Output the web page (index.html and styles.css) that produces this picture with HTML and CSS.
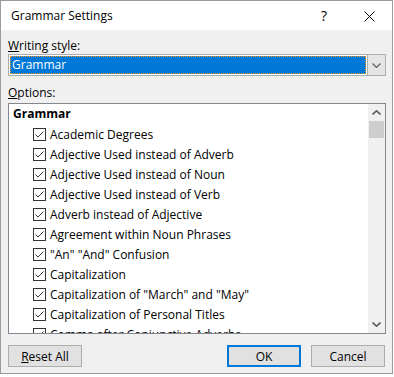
FILE: index.html
```html
<!DOCTYPE html>
<html lang="en">
<head>
    <meta charset="UTF-8">
    <meta name="viewport" content="width=device-width, initial-scale=1.0">
    <title>Grammar Settings</title>
    <link rel="stylesheet" href="styles.css">
</head>
<body>
    <div class="dialog">
        <div class="titlebar">
            <span class="title">Grammar Settings</span>
            <span class="help-btn">?</span>
            <span class="close-btn">
                <svg width="11" height="11" viewBox="0 0 11 11"><path d="M0.5 0.5 L10.5 10.5 M10.5 0.5 L0.5 10.5" stroke="#000" stroke-width="1" fill="none"/></svg>
            </span>
        </div>
        <div class="content">
            <div class="field-label"><u>W</u>riting style:</div>
            <div class="combo">
                <div class="combo-value"><span class="combo-focus">Grammar</span></div>
                <div class="combo-btn">
                    <svg width="9" height="5" viewBox="0 0 9 5"><path d="M0.5 0.5 L4.5 4.5 L8.5 0.5" stroke="#606060" stroke-width="1.2" fill="none"/></svg>
                </div>
            </div>
            <div class="field-label options-label"><u>O</u>ptions:</div>
            <div class="listbox">
                <div class="list-items">
                    <div class="list-header">Grammar</div>
                    <div class="list-row"><span class="check"></span>Academic Degrees</div>
                    <div class="list-row"><span class="check"></span>Adjective Used instead of Adverb</div>
                    <div class="list-row"><span class="check"></span>Adjective Used instead of Noun</div>
                    <div class="list-row"><span class="check"></span>Adjective Used instead of Verb</div>
                    <div class="list-row"><span class="check"></span>Adverb instead of Adjective</div>
                    <div class="list-row"><span class="check"></span>Agreement within Noun Phrases</div>
                    <div class="list-row"><span class="check"></span>"An" "And" Confusion</div>
                    <div class="list-row"><span class="check"></span>Capitalization</div>
                    <div class="list-row"><span class="check"></span>Capitalization of "March" and "May"</div>
                    <div class="list-row"><span class="check"></span>Capitalization of Personal Titles</div>
                    <div class="list-row"><span class="check"></span>Comma after Conjunctive Adverbs</div>
                </div>
                <div class="scrollbar">
                    <div class="scroll-arrow">
                        <svg width="9" height="5" viewBox="0 0 9 5"><path d="M0.5 4.5 L4.5 0.8 L8.5 4.5" stroke="#606060" stroke-width="1.6" fill="none"/></svg>
                    </div>
                    <div class="scroll-thumb"></div>
                    <div class="scroll-track"></div>
                    <div class="scroll-arrow">
                        <svg width="9" height="5" viewBox="0 0 9 5"><path d="M0.5 0.5 L4.5 4.2 L8.5 0.5" stroke="#606060" stroke-width="1.6" fill="none"/></svg>
                    </div>
                </div>
            </div>
        </div>
        <div class="footer">
            <button class="btn btn-reset"><u>R</u>eset All</button>
            <button class="btn btn-default">OK</button>
            <button class="btn">Cancel</button>
        </div>
    </div>
</body>
</html>
```

FILE: styles.css
```css
body {
    margin: 0;
    padding: 0;
    background-color: #fff;
    font-family: "Open Sans", "Noto Sans", sans-serif;
    font-size: 12px;
    color: #000;
}
.dialog {
    width: 393px;
    height: 374px;
    box-sizing: border-box;
    border: 1px solid #9b9b9b;
    background-color: #f0f0f0;
    display: flex;
    flex-direction: column;
}
.titlebar {
    height: 29px;
    background-color: #fff;
    display: flex;
    align-items: center;
}
.title {
    padding-left: 10px;
    flex: 1;
}
.help-btn {
    width: 12px;
    font-size: 14px;
    margin-right: 31px;
    margin-top: -1px;
}
.close-btn {
    display: flex;
    margin-right: 17px;
    margin-top: 1px;
}
.content {
    padding: 0 6px 0 7px;
}
.field-label {
    line-height: 16px;
    margin-top: 8px;
}
.options-label {
    margin-top: 9px;
    margin-bottom: 2px;
}
.combo {
    height: 22px;
    box-sizing: border-box;
    border: 1px solid #adadad;
    background-color: #fff;
    display: flex;
}
.combo-value {
    flex: 1;
    padding: 1px;
    display: flex;
}
.combo-focus {
    flex: 1;
    background-color: #0078d7;
    color: #fff;
    border: 1px dotted #f29b1d;
    padding-left: 1px;
    line-height: 16px;
}
.combo-btn {
    width: 17px;
    border-left: 1px solid #adadad;
    background-color: #e5e5e5;
    display: flex;
    align-items: center;
    justify-content: center;
}
.listbox {
    height: 231px;
    box-sizing: border-box;
    border: 1px solid #828790;
    background-color: #fff;
    display: grid;
    grid-template-columns: 1fr 17px;
    overflow: hidden;
}
.list-items {
    overflow: hidden;
}
.list-header {
    height: 20px;
    line-height: 20px;
    padding-left: 4px;
    font-weight: bold;
}
.list-row {
    height: 20px;
    display: flex;
    align-items: center;
    padding-left: 24px;
    white-space: nowrap;
}
.check {
    width: 13px;
    height: 13px;
    box-sizing: border-box;
    border: 1px solid #333;
    margin-right: 4px;
    background: #fff url("data:image/svg+xml;utf8,<svg xmlns='http://www.w3.org/2000/svg' width='11' height='11' viewBox='0 0 11 11'><path d='M1.5 5.5 L4 8 L9.5 2.5' stroke='%23333' stroke-width='1' fill='none'/></svg>") no-repeat center;
}
.scrollbar {
    background-color: #f0f0f0;
    display: flex;
    flex-direction: column;
}
.scroll-arrow {
    height: 17px;
    display: flex;
    align-items: center;
    justify-content: center;
}
.scroll-thumb {
    height: 17px;
    margin: 0 1px;
    background-color: #cdcdcd;
}
.scroll-track {
    flex: 1;
}
.footer {
    display: flex;
    gap: 10px;
    padding: 11px 7px 0 7px;
}
.btn {
    width: 74px;
    height: 22px;
    box-sizing: border-box;
    border: 1px solid #adadad;
    background-color: #e1e1e1;
    font-family: "Open Sans", "Noto Sans", sans-serif;
    font-size: 12px;
    color: #000;
    padding: 0;
}
.btn-reset {
    margin-right: auto;
}
.btn-default {
    border: 2px solid #0078d7;
}
```
